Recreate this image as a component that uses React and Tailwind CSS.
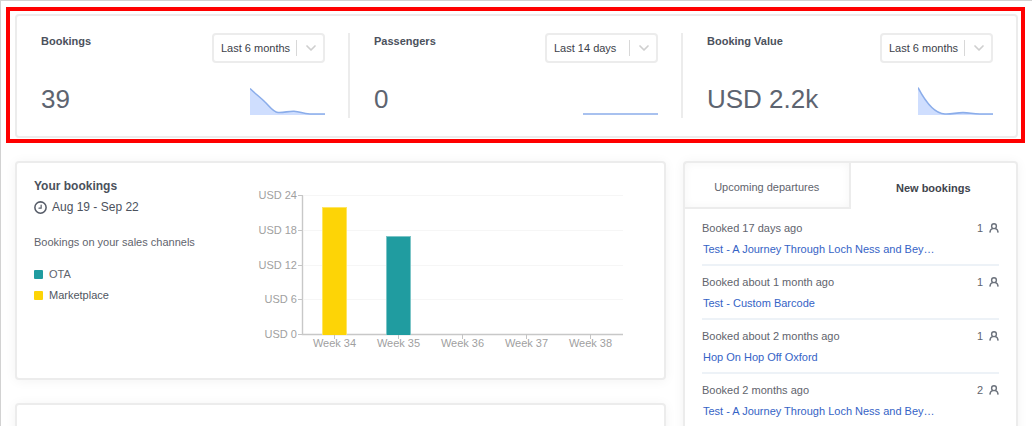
const stats = [
  {
    id: "bookings",
    label: "Bookings",
    value: "39",
    range: "Last 6 months",
    line: "M0 1.5 C5 6.5 10 10 15 15 C19 18.500 23 25 28 25.500 C34 26 38 24 44 24.200 C51 24.500 52 27 60 27 H75",
    filled: true,
  },
  {
    id: "passengers",
    label: "Passengers",
    value: "0",
    range: "Last 14 days",
    line: "M0 27 H75",
    filled: false,
  },
  {
    id: "value",
    label: "Booking Value",
    value: "USD 2.2k",
    range: "Last 6 months",
    line: "M0 0.5 C6 12 15 26.500 27 27 C34 27.300 38 25.600 45 25.600 C52 25.600 54 27 62 27 H75",
    filled: true,
  },
];

const channels = [
  { name: "OTA", swatch: "bg-[#209ca0]", text: "text-[#5f646d]" },
  { name: "Marketplace", swatch: "bg-[#fdd406]", text: "text-[#505661]" },
];

const ticksY = [
  { label: "USD 24", y: 9 },
  { label: "USD 18", y: 44 },
  { label: "USD 12", y: 79 },
  { label: "USD 6", y: 113 },
  { label: "USD 0", y: 148 },
];

const weeks = [
  { label: "Week 34", x: 78, top: 21, fill: "#fdd406", edge: "#fee563" },
  { label: "Week 35", x: 142, top: 50, fill: "#209ca0", edge: "#7cc5c7" },
  { label: "Week 36", x: 206 },
  { label: "Week 37", x: 270 },
  { label: "Week 38", x: 334 },
];

const bookings = [
  { when: "Booked 17 days ago", tour: "Test - A Journey Through Loch Ness and Bey…", guests: 1 },
  { when: "Booked about 1 month ago", tour: "Test - Custom Barcode", guests: 1 },
  { when: "Booked about 2 months ago", tour: "Hop On Hop Off Oxford", guests: 1 },
  { when: "Booked 2 months ago", tour: "Test - A Journey Through Loch Ness and Bey…", guests: 2 },
];

const card = "rounded-[4px] border-2 border-[#ececec] bg-white shadow-[0_1px_12px_rgba(0,0,0,0.05)]";

function RangeSelect({ id, label, value }) {
  return (
    <div className="relative h-[30px] w-[113px]">
      <select
        id={id}
        aria-label={`${label} period`}
        defaultValue={value}
        className="h-full w-full appearance-none rounded-[4px] border-2 border-[#ececec] bg-white pl-[7px] text-[11px] text-[#3c4149]"
      >
        <option>Last 14 days</option>
        <option>Last 6 months</option>
      </select>
      <span className="pointer-events-none absolute inset-y-0 right-2 flex items-center gap-2">
        <span className="h-4 w-px bg-[#d8d8d8]" />
        <svg className="h-3 w-3" viewBox="0 0 12 12" fill="none" stroke="#cfcfcf" strokeWidth="1.700" aria-hidden="true">
          <path d="M2 4 L6 8 L10 4" strokeLinecap="round" strokeLinejoin="round" />
        </svg>
      </span>
    </div>
  );
}

function Stat({ stat, last }) {
  return (
    <section
      className={`flex h-[85px] justify-between border-[#ececec] pr-[23px] pl-6 ${last ? "" : "border-r-2"}`}
    >
      <div>
        <h2 className="text-[11px] leading-4 font-bold text-[#4b515c]">{stat.label}</h2>
        <p className="mt-7 text-[26px] leading-11 text-[#5d6470]">{stat.value}</p>
      </div>
      <div className="flex flex-col items-end justify-between pb-[3px]">
        <RangeSelect id={stat.id} label={stat.label} value={stat.range} />
        <svg className="h-[28px] w-[75px]" viewBox="0 0 75 28" fill="none" aria-hidden="true">
          {stat.filled && <path d={`${stat.line} V28 H0 Z`} fill="#cfdefe" />}
          <path d={stat.line} stroke="#8badea" strokeWidth="1.600" />
        </svg>
      </div>
    </section>
  );
}

function Chart() {
  return (
    <svg
      className="mt-2.5 h-[170px] w-[370px] shrink-0 font-['Liberation_Sans',Arial,sans-serif] text-[11px]"
      viewBox="0 0 370 170"
      role="img"
      aria-label="Bookings per week"
    >
      {ticksY.map((t) => (
        <g key={t.label}>
          <path d={`M48 ${t.y + 0.5} H367`} stroke="#f6f6f6" />
          <path d={`M42 ${t.y + 0.5} H47`} stroke="#c4c4c4" />
          <text x="41" y={t.y + 4} textAnchor="end" fill="#9f9f9f">
            {t.label}
          </text>
        </g>
      ))}
      <path d="M46.500 9 V148.500 H367" fill="none" stroke="#c8c8c8" strokeWidth="1.400" />
      {weeks.map((w) => (
        <g key={w.label}>
          <path d={`M${w.x + 0.5} 148 V153`} stroke="#c4c4c4" />
          {w.fill && (
            <>
              <rect x={w.x - 12} y={w.top} width="25" height={149 - w.top} fill={w.edge} />
              <rect x={w.x - 11} y={w.top + 1} width="23" height={148 - w.top} fill={w.fill} />
            </>
          )}
          <text x={w.x + 0.5} y="161" textAnchor="middle" fill="#9f9f9f">
            {w.label}
          </text>
        </g>
      ))}
    </svg>
  );
}

function Clock() {
  return (
    <svg className="h-[13px] w-[13px]" viewBox="0 0 12 12" fill="none" stroke="#565c68" strokeLinecap="round" aria-hidden="true">
      <circle cx="6" cy="6" r="5.200" strokeWidth="1.400" />
      <path d="M6.600 3.800 V6.600 H4.600" strokeWidth="1.100" />
    </svg>
  );
}

function Person() {
  return (
    <svg className="h-[10px] w-[10px]" viewBox="0 0 10 10" fill="none" stroke="#6d737d" strokeWidth="1.400" aria-hidden="true">
      <circle cx="5" cy="3.200" r="2.400" />
      <path d="M0.900 9.600 C1 7.300 2.300 6 3.800 5.400 M6.200 5.400 C7.700 6 9 7.300 9.100 9.600" />
    </svg>
  );
}

export default function App() {
  return (
    <main className="h-screen overflow-hidden border-t border-l border-[#d2d2d2] bg-white pt-[6px] pr-[7px] pl-[5px] font-['Liberation_Sans',Arial,sans-serif] text-[11px] text-[#5f646d]">
      <div className="border-4 border-[#ff0000] pt-[3px] pr-[3px] pb-px pl-[5px]">
        <div className="grid grid-cols-3 rounded-[4px] border-2 border-[#ececec] bg-white pt-[17px] pb-[18px]">
          {stats.map((s, i) => (
            <Stat key={s.id} stat={s} last={i === stats.length - 1} />
          ))}
        </div>
      </div>

      <div className="mt-[18px] grid grid-cols-[651fr_335fr] gap-[17px] pr-[7px] pl-[9px]">
        <div className="flex flex-col gap-[23px]">
          <section className={`${card} flex pt-[13px] pr-[17px] pb-[22px] pl-[17px]`}>
            <div className="w-[222px] shrink-0">
              <h2 className="text-[12px] leading-5 font-bold text-[#4b515c]">Your bookings</h2>
              <p className="flex items-center gap-[5px] text-[12px] leading-[22px] text-[#4c525d]">
                <Clock />
                Aug 19 - Sep 22
              </p>
              <p className="mt-3.5 leading-5">Bookings on your sales channels</p>
              <ul className="mt-3">
                {channels.map((c) => (
                  <li key={c.name} className={`flex items-center gap-[6px] leading-[21px] ${c.text}`}>
                    <span className={`h-[9px] w-[9px] rounded-[1px] ${c.swatch}`} />
                    {c.name}
                  </li>
                ))}
              </ul>
            </div>
            <Chart />
          </section>
          <section className={`${card} h-[219px]`} />
        </div>

        <section className={`${card} min-w-0`}>
          <div className="grid grid-cols-2" role="tablist">
            <button
              type="button"
              role="tab"
              aria-selected="false"
              className="h-[46px] border-r-2 border-b-2 border-[#ececec] pt-1 shadow-[inset_0_0_10px_rgba(0,0,0,0.04)]"
            >
              Upcoming departures
            </button>
            <button type="button" role="tab" aria-selected="true" className="h-[46px] pt-1 font-bold text-[#3f444d]">
              New bookings
            </button>
          </div>
          <ul className="mt-[3px] px-[17px]">
            {bookings.map((b) => (
              <li key={b.when} className="border-b-2 border-[#edf2f7] pt-[6px] pb-1">
                <div className="flex items-center justify-between leading-5">
                  <span>{b.when}</span>
                  <span className="flex items-center gap-[6px]">
                    {b.guests}
                    <Person />
                  </span>
                </div>
                <a href="#booking" className="block pl-px leading-[22px] text-[#3563c6]">
                  {b.tour}
                </a>
              </li>
            ))}
          </ul>
        </section>
      </div>
    </main>
  );
}
